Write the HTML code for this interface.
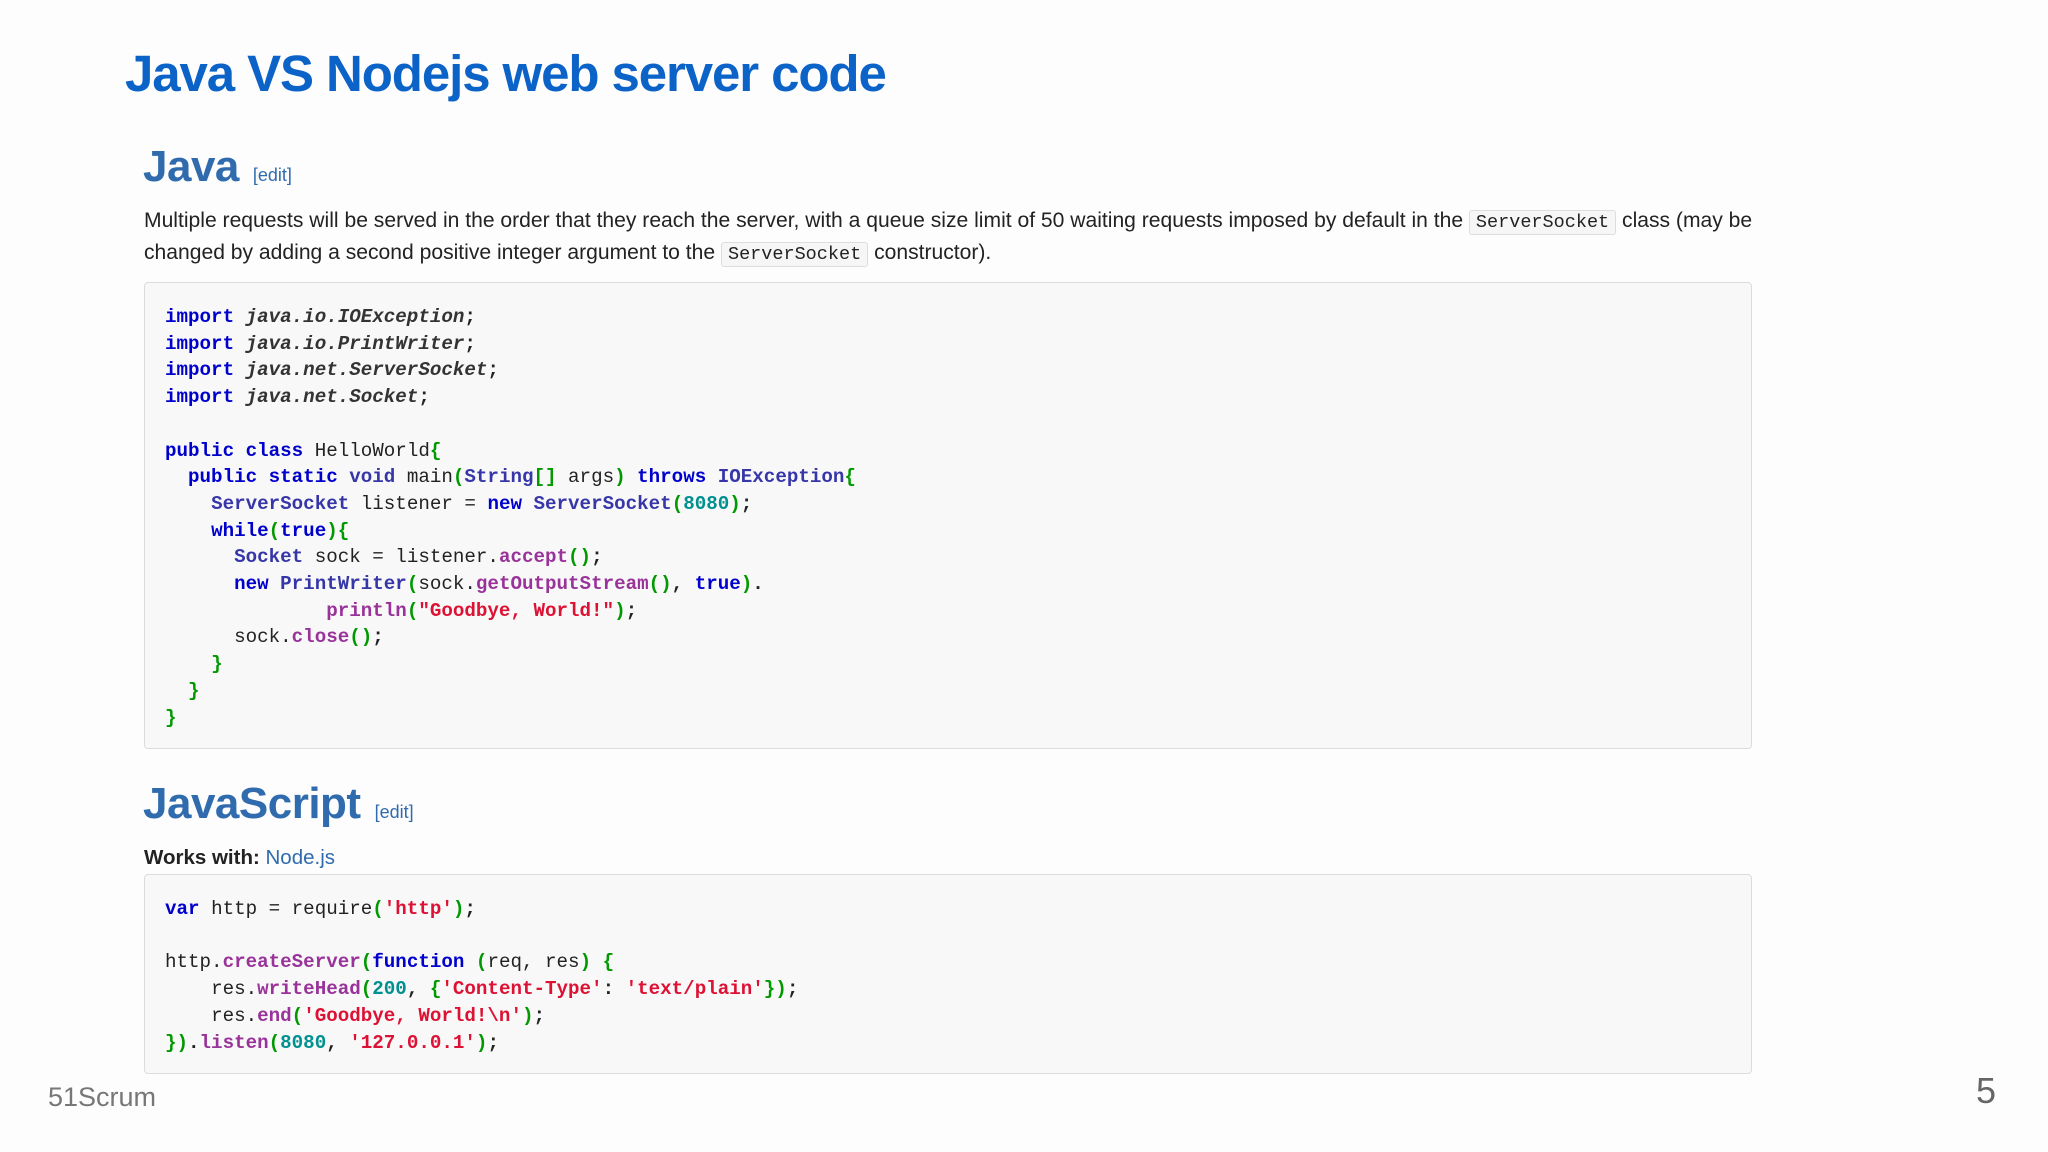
<!DOCTYPE html>
<html><head><meta charset="utf-8"><style>
body{margin:0;width:2048px;height:1152px;background:#fdfdfe;position:relative;overflow:hidden;font-family:"Liberation Sans",sans-serif;}
.a{position:absolute;white-space:nowrap}
h1{position:absolute;left:125px;top:44px;margin:0;font-size:51px;font-weight:bold;color:#0b63c8;letter-spacing:-1.1px}
.h2{font-size:44px;color:#2f6bad;font-weight:bold;letter-spacing:-0.5px}
.h2 small{font-size:18px;font-weight:normal;color:#2f6bad;margin-left:14px;letter-spacing:0}
p{position:absolute;left:144px;top:206px;width:1620px;margin:0;font-size:21.1px;line-height:30px;color:#222}
code{font-family:"Liberation Mono",monospace;font-size:18.5px;background:#f6f6f6;border:1px solid #ddd;border-radius:3px;padding:1px 6px}
.box{position:absolute;left:144px;width:1608px;background:#f8f8f9;border:1px solid #dcdcdc;border-radius:4px;box-sizing:border-box}
pre{margin:0;padding:21px 20px;font-family:"Liberation Mono",monospace;font-size:19.2px;line-height:26.7px;color:#222;font-weight:bold}
.k{color:#0000cc}.t{color:#3636a8}.m{color:#993399}.s{color:#dd1133}.n{color:#009090}.b{color:#009900}.i{font-style:italic;color:#333}
</style></head><body>
<h1>Java VS Nodejs web server code</h1>
<div class="a h2" style="left:143px;top:142px">Java<small>[edit]</small></div>
<p>Multiple requests will be served in the order that they reach the server, with a queue size limit of 50 waiting requests imposed by default in the <code>ServerSocket</code> class (may be changed by adding a second positive integer argument to the <code>ServerSocket</code> constructor).</p>
<div class="box" style="top:282px;height:467px"><pre><span class="k">import</span> <span class="i">java.io.IOException</span>;
<span class="k">import</span> <span class="i">java.io.PrintWriter</span>;
<span class="k">import</span> <span class="i">java.net.ServerSocket</span>;
<span class="k">import</span> <span class="i">java.net.Socket</span>;

<span class="k">public</span> <span class="k">class</span> <span style="font-weight:normal">HelloWorld</span><span class="b">{</span>
  <span class="k">public</span> <span class="k">static</span> <span class="t">void</span> <span style="font-weight:normal">main</span><span class="b">(</span><span class="t">String</span><span class="b">[]</span> <span style="font-weight:normal">args</span><span class="b">)</span> <span class="k">throws</span> <span class="t">IOException</span><span class="b">{</span>
    <span class="t">ServerSocket</span> <span style="font-weight:normal">listener =</span> <span class="k">new</span> <span class="t">ServerSocket</span><span class="b">(</span><span class="n">8080</span><span class="b">)</span>;
    <span class="k">while</span><span class="b">(</span><span class="k">true</span><span class="b">){</span>
      <span class="t">Socket</span> <span style="font-weight:normal">sock = listener.</span><span class="m">accept</span><span class="b">()</span>;
      <span class="k">new</span> <span class="t">PrintWriter</span><span class="b">(</span><span style="font-weight:normal">sock.</span><span class="m">getOutputStream</span><span class="b">()</span>, <span class="k">true</span><span class="b">)</span>.
              <span class="m">println</span><span class="b">(</span><span class="s">"Goodbye, World!"</span><span class="b">)</span>;
      <span style="font-weight:normal">sock.</span><span class="m">close</span><span class="b">()</span>;
    <span class="b">}</span>
  <span class="b">}</span>
<span class="b">}</span></pre></div>
<div class="a h2" style="left:143px;top:779px">JavaScript<small>[edit]</small></div>
<div class="a" style="left:144px;top:846px;font-size:20.5px;color:#222"><b>Works with:</b> <span style="color:#2f6bad">Node.js</span></div>
<div class="box" style="top:874px;height:200px"><pre><span class="k">var</span> <span style="font-weight:normal">http = require</span><span class="b">(</span><span class="s">'http'</span><span class="b">)</span>;

<span style="font-weight:normal">http.</span><span class="m">createServer</span><span class="b">(</span><span class="k">function</span> <span class="b">(</span><span style="font-weight:normal">req, res</span><span class="b">)</span> <span class="b">{</span>
    <span style="font-weight:normal">res.</span><span class="m">writeHead</span><span class="b">(</span><span class="n">200</span>, <span class="b">{</span><span class="s">'Content-Type'</span>: <span class="s">'text/plain'</span><span class="b">})</span>;
    <span style="font-weight:normal">res.</span><span class="m">end</span><span class="b">(</span><span class="s">'Goodbye, World!\n'</span><span class="b">)</span>;
<span class="b">})</span>.<span class="m">listen</span><span class="b">(</span><span class="n">8080</span>, <span class="s">'127.0.0.1'</span><span class="b">)</span>;</pre></div>
<div class="a" style="left:48px;top:1082px;font-size:27px;color:#777">51Scrum</div>
<div class="a" style="left:1976px;top:1070px;font-size:36px;color:#666">5</div>
</body></html>
